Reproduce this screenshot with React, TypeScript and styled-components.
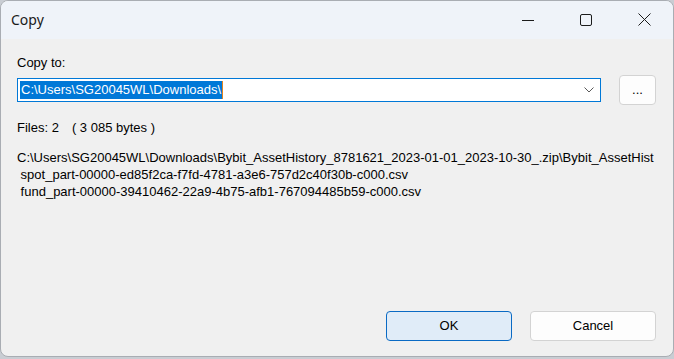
import styled, { createGlobalStyle } from "styled-components";

const GlobalStyle = createGlobalStyle`
  html, body {
    margin: 0;
    padding: 0;
    background: #c9cdd3;
  }
  * {
    box-sizing: border-box;
  }
`;

// first line is cut by the dialog edge in the original, keep the visible part
const FILES = [
  "C:\\Users\\SG20045WL\\Downloads\\Bybit_AssetHistory_8781621_2023-01-01_2023-10-30_.zip\\Bybit_AssetHist",
  " spot_part-00000-ed85f2ca-f7fd-4781-a3e6-757d2c40f30b-c000.csv",
  " fund_part-00000-39410462-22a9-4b75-afb1-767094485b59-c000.csv",
];

function App() {
  return (
    <>
      <GlobalStyle />
      <Window>
        <TitleBar>
          <Title>Copy</Title>
          <Caption>
            <CaptionButton aria-label="Minimize">
              <svg width="12" height="12" viewBox="0 0 12 12">
                <path d="M0 6.5h12" stroke="#1b1b1b" strokeWidth="1" />
              </svg>
            </CaptionButton>
            <CaptionButton aria-label="Maximize">
              <svg width="12" height="12" viewBox="0 0 12 12">
                <rect x="0.5" y="0.5" width="11" height="11" rx="1.5" fill="none" stroke="#1b1b1b" strokeWidth="1" />
              </svg>
            </CaptionButton>
            <CaptionButton aria-label="Close">
              <svg width="13" height="13" viewBox="0 0 13 13">
                <path d="M0.5 0.5l12 12M12.5 0.5l-12 12" stroke="#1b1b1b" strokeWidth="1" />
              </svg>
            </CaptionButton>
          </Caption>
        </TitleBar>
        <Body>
          <Label>Copy to:</Label>
          <DestRow>
            <Combo>
              <Selected>C:\Users\SG20045WL\Downloads\</Selected>
              <Caret />
              <Chevron>
                <svg width="10" height="6" viewBox="0 0 10 6">
                  <path d="M0.5 0.5l4.5 4.5 4.5-4.5" fill="none" stroke="#5a5a5a" strokeWidth="1" />
                </svg>
              </Chevron>
            </Combo>
            <Button>...</Button>
          </DestRow>
          <Summary>
            <span>Files: 2</span>
            <Bytes>( 3 085 bytes )</Bytes>
          </Summary>
          <FileList>
            {FILES.map((f, i) => (
              <FileLine key={i}>{f}</FileLine>
            ))}
          </FileList>
          <Footer>
            <Button $wide $primary>OK</Button>
            <Button $wide>Cancel</Button>
          </Footer>
        </Body>
      </Window>
    </>
  );
}

export default App;

const Window = styled.div`
  width: 674px;
  height: 357px;
  display: flex;
  flex-direction: column;
  background: #f0f0f0;
  border: 1px solid #a9adb3;
  border-radius: 8px;
  overflow: hidden;
  font-family: "Liberation Sans", Arial, sans-serif;
  font-size: 13px;
  color: #000;
`;

const TitleBar = styled.div`
  height: 38px;
  flex: none;
  display: flex;
  align-items: center;
  background: #eff3f9;
`;

const Title = styled.div`
  flex: 1;
  padding-left: 10px;
  padding-bottom: 1px;
  font-family: "Noto Sans", "Open Sans", sans-serif;
  font-size: 14px;
  color: #1a1a1a;
`;

const Caption = styled.div`
  display: flex;
  height: 100%;
`;

const CaptionButton = styled.div`
  width: 58px;
  height: 100%;
  display: flex;
  align-items: center;
  justify-content: center;
  padding-bottom: 1px;
`;

const Body = styled.div`
  flex: 1;
  display: flex;
  flex-direction: column;
  padding: 15px 17px 15px 16px;
`;

const Label = styled.div`
  line-height: 17px;
`;

const DestRow = styled.div`
  display: flex;
  align-items: center;
  gap: 18px;
  height: 30px;
  margin-top: 4px;
`;

const Combo = styled.div`
  flex: 1;
  height: 24px;
  position: relative;
  display: flex;
  align-items: center;
  padding: 0 2px;
  background: #fff;
  border: 1px solid #0078d7;
`;

const Selected = styled.span`
  background: #0078d7;
  color: #fff;
  line-height: 18px;
  padding: 0 1px;
`;

const Caret = styled.span`
  width: 1px;
  height: 18px;
  background: #e3841f;
`;

const Chevron = styled.span`
  position: absolute;
  right: 6px;
  top: 8px;
  display: flex;
`;

const Button = styled.div<{ $wide?: boolean; $primary?: boolean }>`
  width: ${(p) => (p.$wide ? 126 : 37)}px;
  height: 30px;
  display: flex;
  align-items: center;
  justify-content: center;
  border-radius: 4px;
  background: ${(p) => (p.$primary ? "#e0ecf8" : "#fdfdfd")};
  border: 1px solid ${(p) => (p.$primary ? "#0a6ac4" : "#d3d3d3")};
  padding-bottom: 1px;
`;

const Summary = styled.div`
  display: flex;
  line-height: 17px;
  margin-top: 14px;
`;

const Bytes = styled.span`
  margin-left: 13px;
`;

const FileList = styled.div`
  margin-top: 13px;
  overflow: hidden;
`;

const FileLine = styled.div`
  white-space: pre;
  line-height: 17px;
`;

const Footer = styled.div`
  margin-top: auto;
  display: flex;
  justify-content: flex-end;
  gap: 18px;
`;
